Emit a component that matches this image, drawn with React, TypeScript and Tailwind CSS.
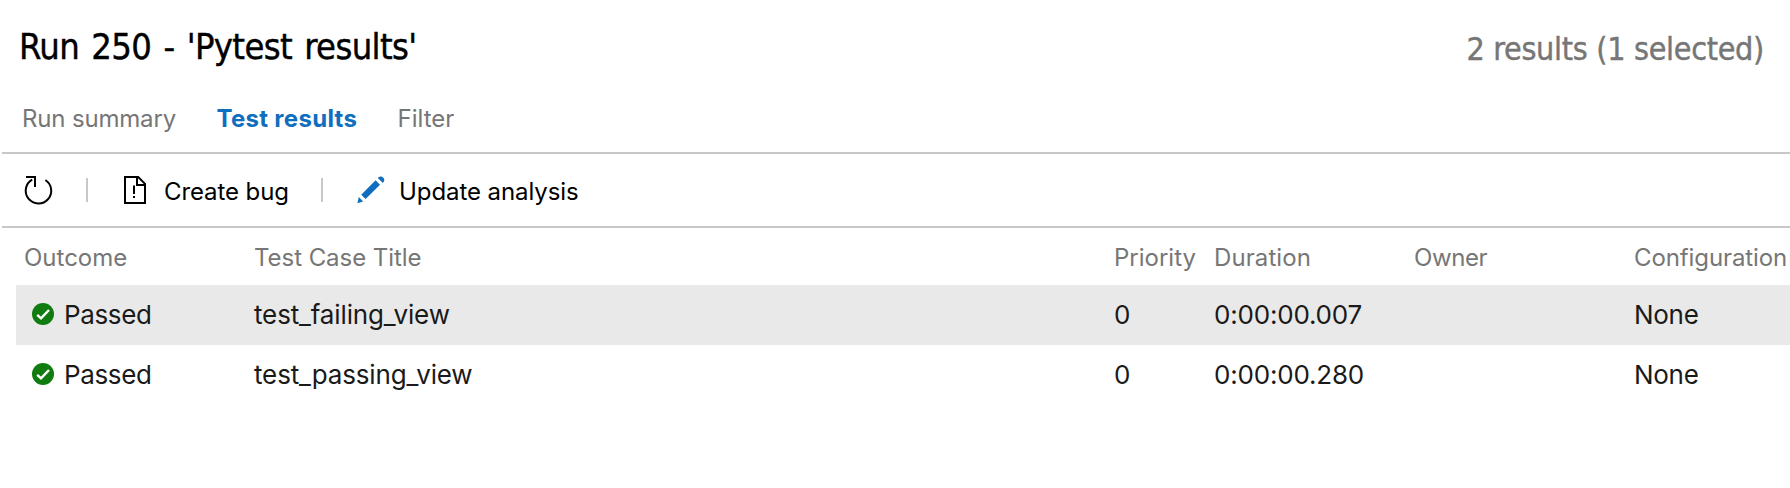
import React from "react";

type Result = { outcome: string; title: string; priority: string; duration: string; configuration: string; selected: boolean };

const results: Result[] = [
  { outcome: "Passed", title: "test_failing_view", priority: "0", duration: "0:00:00.007", configuration: "None", selected: true },
  { outcome: "Passed", title: "test_passing_view", priority: "0", duration: "0:00:00.280", configuration: "None", selected: false },
];

function RefreshIcon() {
  return (
    <svg className="h-8 w-8 shrink-0" viewBox="0 0 32 32" fill="none" stroke="#000">
      <path d="M10.2 5.6A12.75 12.75 0 1 0 23.4 6" strokeWidth="2" />
      <path d="M4 3h9v10" strokeWidth="2" />
    </svg>
  );
}

function BugFileIcon() {
  return (
    <svg className="h-7 w-[22px] shrink-0" viewBox="0 0 22 28" fill="none" stroke="#000" strokeWidth="2">
      <path d="M1 1h13.2L21 7.8V27H1z" />
      <path d="M13 1v8h8" />
      <path d="M10 9.5v8.5M10 20v2" />
    </svg>
  );
}

function PencilIcon() {
  return (
    <svg className="h-7 w-7 shrink-0" viewBox="0 0 28 28" fill="#106ebe">
      <path d="M18.6 4.3 23 8.7 8.6 23.1 4.2 18.7z" />
      <path d="M1.8 21 6.1 25.4 0.4 27.2z" />
      <path d="M20.8 2.1c1.6-1.8 3.7-2 5.3-.6 1.7 1.6 1.6 3.8-.3 5.4z" />
    </svg>
  );
}

function PassedIcon() {
  return (
    <svg className="h-[22px] w-[22px] shrink-0" viewBox="0 0 22 22">
      <circle cx="11" cy="11" r="11" fill="#107c10" />
      <path d="M5.2 11.8 9 15.4 17 7" fill="none" stroke="#fff" strokeWidth="2.4" />
    </svg>
  );
}

export default function App() {
  return (
    <div className="h-[488px] w-full overflow-hidden bg-white font-['Inter',sans-serif] whitespace-nowrap text-black">
      <header className="flex h-[92px] items-start justify-between pr-[26px] pl-[19px] font-['DejaVu_Sans_Condensed','DejaVu_Sans',sans-serif] [-webkit-text-stroke:0.4px]">
        <h1 className="pt-[26px] text-[36px] leading-[42px] tracking-[-0.64px] [word-spacing:2.6px]">Run 250 - 'Pytest results'</h1>
        <span className="pt-[29px] text-[32px] leading-[40px] tracking-[-0.31px] text-[#767676]">2 results (1 selected)</span>
      </header>
      <div className="pl-0.5">
        <nav className="flex h-[62px] items-start border-b-2 border-[#c8c8c8] pt-[13px] pl-5 text-2xl leading-7 text-[#767676]">
          <span className="w-[194.5px] tracking-[-0.17px]">Run summary</span>
          <span className="w-[181px] font-bold tracking-[0.3px] text-[#106ebe]">Test results</span>
          <span>Filter</span>
        </nav>
        <div className="flex h-[74px] items-center border-b-2 border-[#c8c8c8] pl-5 text-2xl">
          <RefreshIcon />
          <span className="ml-8 h-6 w-0.5 bg-[#c8c8c8]" />
          <span className="ml-9 flex items-center">
            <BugFileIcon />
            <span className="ml-[18px] w-[157px] pt-[3px] tracking-[-0.1px]">Create bug</span>
          </span>
          <span className="h-6 w-0.5 bg-[#c8c8c8]" />
          <span className="ml-[34px] flex items-center">
            <PencilIcon />
            <span className="ml-3.5 pt-[3px] tracking-[-0.08px]">Update analysis</span>
          </span>
        </div>
      </div>
      <div className="pl-4">
        <div className="grid h-[57px] grid-cols-[229px_853px_100px_200px_220px_1fr] items-center pt-0.5 pl-2 text-2xl text-[#767676]">
          <span>Outcome</span>
          <span className="pl-px tracking-[-0.05px]">Test Case Title</span>
          <span className="pl-2">Priority</span>
          <span className="pl-2 tracking-[0.1px]">Duration</span>
          <span className="pl-2 tracking-[-0.4px]">Owner</span>
          <span className="pl-2 tracking-[-0.1px]">Configuration</span>
        </div>
        {results.map((r) => (
          <div
            key={r.title}
            className={`grid h-[60px] grid-cols-[229px_853px_100px_200px_220px_1fr] items-center pb-0.5 pl-2 text-[26px] tracking-[-0.2px] text-[#1a1a1a] ${r.selected ? "bg-[#e9e9e9]" : "bg-white"}`}
          >
            <span className="flex items-center gap-2.5 pl-2 tracking-[-0.36px]">
              <PassedIcon />
              <span>{r.outcome}</span>
            </span>
            <span className="pl-px tracking-[-0.14px]">{r.title}</span>
            <span className="pl-2">{r.priority}</span>
            <span className="pl-2">{r.duration}</span>
            <span />
            <span className="pl-2 tracking-[-0.3px]">{r.configuration}</span>
          </div>
        ))}
      </div>
    </div>
  );
}
